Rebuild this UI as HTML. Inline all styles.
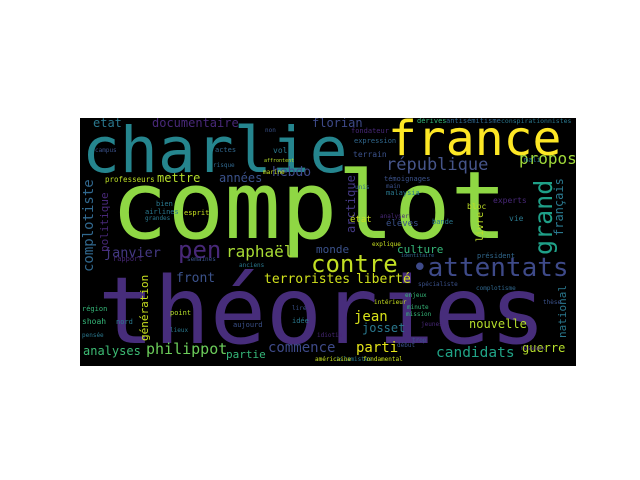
<!DOCTYPE html>
<html><head><meta charset="utf-8"><style>
html,body{margin:0;padding:0;background:#fff;width:640px;height:480px;overflow:hidden}
#c{position:absolute;left:80px;top:118px;width:496px;height:248px;background:#000;overflow:hidden}
#w{position:absolute;left:0;top:0;width:640px;height:480px;overflow:hidden;clip-path:inset(118px 64px 114px 80px)}
#w span{position:absolute;font-family:"DejaVu Sans Mono","Liberation Mono",monospace;line-height:1;white-space:nowrap}
#w span.v{transform:rotate(-90deg);transform-origin:0 0}
</style></head><body>
<div id="c"></div>
<div id="w">
<span style="left:98px;top:265px;font-size:93px;color:#472d7b">théories</span>
<span style="left:111px;top:160px;font-size:94px;color:#8fd744">complot</span>
<span style="left:82px;top:119px;font-size:63px;color:#25858e">charlie</span>
<span style="left:388px;top:115px;font-size:48px;color:#fde725">france</span>
<span style="left:412px;top:255px;font-size:26px;color:#3e4a89">•attentats</span>
<span style="left:311px;top:252px;font-size:24px;color:#c2df23">contre</span>
<span style="left:178px;top:238px;font-size:24px;color:#482878">pen</span>
<span style="left:226px;top:244px;font-size:16px;color:#a8db34">raphaël</span>
<span style="left:386px;top:157px;font-size:17px;color:#46558a">république</span>
<span style="left:519px;top:151px;font-size:16px;color:#a0da39">propos</span>
<span class="v" style="left:531px;top:255px;font-size:25px;color:#1fa088">grand</span>
<span class="v" style="left:553px;top:236px;font-size:12px;color:#2a788e">français</span>
<span class="v" style="left:82px;top:272px;font-size:14px;color:#31688e">complotiste</span>
<span class="v" style="left:99px;top:252px;font-size:11px;color:#482878">politique</span>
<span class="v" style="left:345px;top:233px;font-size:12px;color:#443983">arctique</span>
<span class="v" style="left:476px;top:242px;font-size:10px;color:#bddf26">livre</span>
<span class="v" style="left:557px;top:338px;font-size:11px;color:#2a788e">national</span>
<span class="v" style="left:139px;top:341px;font-size:11px;color:#c8e020">génération</span>
<span style="left:93px;top:117px;font-size:12px;color:#2a788e">etat</span>
<span style="left:152px;top:117px;font-size:12px;color:#482878">documentaire</span>
<span style="left:312px;top:117px;font-size:12px;color:#3e4a89">florian</span>
<span style="left:105px;top:176px;font-size:7.5px;color:#bddf26">professeurs</span>
<span style="left:157px;top:172px;font-size:12px;color:#b5de2b">mettre</span>
<span style="left:219px;top:172px;font-size:12px;color:#3b528b">années</span>
<span style="left:272px;top:166px;font-size:13px;color:#3e4a89">hebdo</span>
<span style="left:104px;top:247px;font-size:13.5px;color:#443983">janvier</span>
<span style="left:176px;top:272px;font-size:13px;color:#3b528b">front</span>
<span style="left:264px;top:273px;font-size:13px;color:#d0e11c">terroristes</span>
<span style="left:356px;top:273px;font-size:13px;color:#d0e11c">liberté</span>
<span style="left:316px;top:244px;font-size:11px;color:#3b528b">monde</span>
<span style="left:397px;top:244px;font-size:11px;color:#35b779">culture</span>
<span style="left:354px;top:310px;font-size:14px;color:#d8e219">jean</span>
<span style="left:362px;top:322px;font-size:12px;color:#2a788e">josset</span>
<span style="left:469px;top:318px;font-size:12px;color:#b5de2b">nouvelle</span>
<span style="left:83px;top:345px;font-size:12px;color:#3dbc74">analyses</span>
<span style="left:146px;top:342px;font-size:15px;color:#6ccd5a">philippot</span>
<span style="left:268px;top:341px;font-size:14px;color:#3e4a89">commence</span>
<span style="left:356px;top:341px;font-size:14px;color:#e5e419">parti</span>
<span style="left:226px;top:349px;font-size:11px;color:#35b779">partie</span>
<span style="left:436px;top:346px;font-size:14.5px;color:#20a386">candidats</span>
<span style="left:522px;top:342px;font-size:12px;color:#b5de2b">guerre</span>
<span style="left:353px;top:151px;font-size:8px;color:#3b528b">terrain</span>
<span style="left:354px;top:138px;font-size:7px;color:#31688e">expression</span>
<span style="left:351px;top:128px;font-size:7px;color:#482878">fondateur</span>
<span style="left:417px;top:118px;font-size:7px;color:#35b779">dérives</span>
<span style="left:446px;top:118px;font-size:7px;color:#31688e">antisémitisme</span>
<span style="left:501px;top:118px;font-size:6.5px;color:#2a788e">conspirationnistes</span>
<span style="left:384px;top:176px;font-size:7px;color:#3b528b">témoignages</span>
<span style="left:386px;top:190px;font-size:7px;color:#2a788e">malaysia</span>
<span style="left:467px;top:203px;font-size:8px;color:#bddf26">bloc</span>
<span style="left:350px;top:216px;font-size:9px;color:#c8e020">état</span>
<span style="left:386px;top:220px;font-size:9px;color:#3b528b">élèves</span>
<span style="left:493px;top:197px;font-size:8px;color:#482878">experts</span>
<span style="left:509px;top:215px;font-size:8px;color:#2a788e">vie</span>
<span style="left:524px;top:157px;font-size:7px;color:#2a788e">mali</span>
<span style="left:380px;top:214px;font-size:6px;color:#482878">analyser</span>
<span style="left:432px;top:219px;font-size:7px;color:#2a788e">bande</span>
<span style="left:386px;top:184px;font-size:6px;color:#3b528b">main</span>
<span style="left:355px;top:185px;font-size:6px;color:#31688e">unis</span>
<span style="left:215px;top:147px;font-size:7px;color:#31688e">actes</span>
<span style="left:273px;top:147px;font-size:8px;color:#2a788e">vol</span>
<span style="left:265px;top:128px;font-size:6px;color:#3b528b">non</span>
<span style="left:213px;top:163px;font-size:6px;color:#31688e">risque</span>
<span style="left:264px;top:159px;font-size:5px;color:#b5de2b">affrontent</span>
<span style="left:263px;top:170px;font-size:6px;color:#c8e020">marine</span>
<span style="left:95px;top:148px;font-size:6px;color:#3b528b">campus</span>
<span style="left:145px;top:209px;font-size:7px;color:#2a788e">airlines</span>
<span style="left:145px;top:216px;font-size:6px;color:#2a788e">grandes</span>
<span style="left:156px;top:201px;font-size:7px;color:#2a788e">bien</span>
<span style="left:184px;top:210px;font-size:7px;color:#c8e020">esprit</span>
<span style="left:113px;top:256px;font-size:7px;color:#482878">rapport</span>
<span style="left:187px;top:257px;font-size:6px;color:#3b528b">semaines</span>
<span style="left:239px;top:263px;font-size:6px;color:#2a788e">anciens</span>
<span style="left:372px;top:242px;font-size:6px;color:#c8e020">explique</span>
<span style="left:401px;top:254px;font-size:5px;color:#31688e">identitaire</span>
<span style="left:477px;top:253px;font-size:7px;color:#31688e">président</span>
<span style="left:476px;top:286px;font-size:6px;color:#31688e">complotisme</span>
<span style="left:418px;top:282px;font-size:6px;color:#3b528b">spécialiste</span>
<span style="left:374px;top:300px;font-size:6px;color:#c8e020">intérieur</span>
<span style="left:407px;top:305px;font-size:6px;color:#35b779">minute</span>
<span style="left:406px;top:312px;font-size:6px;color:#35b779">mission</span>
<span style="left:405px;top:293px;font-size:6px;color:#35b779">enjeux</span>
<span style="left:82px;top:306px;font-size:7px;color:#35b779">région</span>
<span style="left:82px;top:318px;font-size:8px;color:#35b779">shoah</span>
<span style="left:116px;top:319px;font-size:7px;color:#2a788e">nord</span>
<span style="left:82px;top:333px;font-size:6px;color:#2a788e">pensée</span>
<span style="left:170px;top:310px;font-size:7px;color:#b5de2b">point</span>
<span style="left:170px;top:328px;font-size:6px;color:#2a788e">lieux</span>
<span style="left:233px;top:322px;font-size:7px;color:#3b528b">aujourd</span>
<span style="left:292px;top:318px;font-size:7px;color:#2a788e">idée</span>
<span style="left:292px;top:306px;font-size:6px;color:#3b528b">lire</span>
<span style="left:317px;top:333px;font-size:6px;color:#482878">idiotie</span>
<span style="left:397px;top:343px;font-size:6px;color:#3b528b">début</span>
<span style="left:336px;top:357px;font-size:6px;color:#2a788e">islamistes</span>
<span style="left:315px;top:357px;font-size:6px;color:#c8e020">américaine</span>
<span style="left:363px;top:357px;font-size:6px;color:#c8e020">fondamental</span>
<span style="left:520px;top:346px;font-size:6px;color:#482878">réseaux</span>
<span style="left:543px;top:300px;font-size:6px;color:#3b528b">thèse</span>
<span style="left:412px;top:338px;font-size:6px;color:#3b528b">trop</span>
<span style="left:421px;top:322px;font-size:6px;color:#482878">jeunes</span>
</div>
</body></html>
